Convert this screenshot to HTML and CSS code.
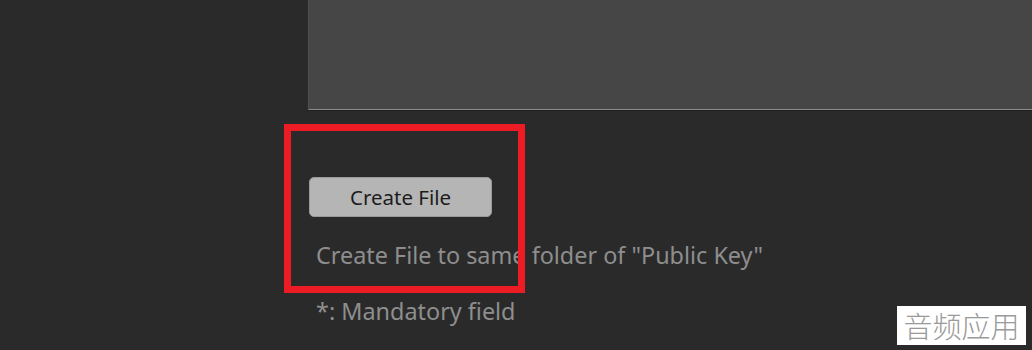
FILE: index.html
```html
<!DOCTYPE html>
<html lang="en">
<head>
<meta charset="utf-8">
<link rel="stylesheet" href="styles.css">
</head>
<body>
<div class="page">
  <div class="main">
    <div class="panel"></div>
    <div class="content">
      <button class="btn">Create File</button>
      <p class="hint">Create File to same folder of "Public Key"</p>
      <p class="hint mandatory">*: Mandatory field</p>
    </div>
  </div>
  <div class="highlight"></div>
  <div class="watermark">音频应用</div>
</div>
</body>
</html>
```
FILE: styles.css
```css
html, body {
  margin: 0;
  padding: 0;
}
body {
  background: #2a2a2a;
  width: 1032px;
  height: 350px;
  overflow: hidden;
  font-family: "Noto Sans", "Open Sans", sans-serif;
}
.page {
  position: relative;
  width: 1032px;
  height: 350px;
}
.main {
  margin-left: 308px;
  display: flex;
  flex-direction: column;
}
.panel {
  height: 109px;
  background: #464646;
  border-left: 1px solid #505050;
  border-bottom: 1px solid #8c8c8c;
  box-shadow: 0 1px 0 #1e1e1e;
}
.content {
  display: flex;
  flex-direction: column;
  align-items: flex-start;
  padding-top: 67px;
  padding-left: 1px;
}
.btn {
  width: 183px;
  height: 40px;
  background: #b5b5b5;
  border: 1px solid #9a9a9a;
  border-radius: 5px;
  color: #1c1c1c;
  font-family: "Noto Sans", "Open Sans", sans-serif;
  font-size: 20.5px;
  padding: 0;
}
.hint {
  margin: 22px 0 0 7px;
  color: #8e8e8e;
  font-size: 23.4px;
  line-height: 32px;
  white-space: nowrap;
}
.mandatory {
  margin-top: 24px;
}
.highlight {
  position: absolute;
  left: 284px;
  top: 124px;
  width: 227px;
  height: 155px;
  border: 7px solid #ed1c24;
}
.watermark {
  position: absolute;
  left: 897px;
  top: 306px;
  width: 129px;
  height: 39px;
  background: #ffffff;
  color: #9a9a9a;
  font-family: "Noto Sans CJK SC", sans-serif;
  font-weight: 300;
  font-size: 29px;
  line-height: 39px;
  text-align: center;
}
```
